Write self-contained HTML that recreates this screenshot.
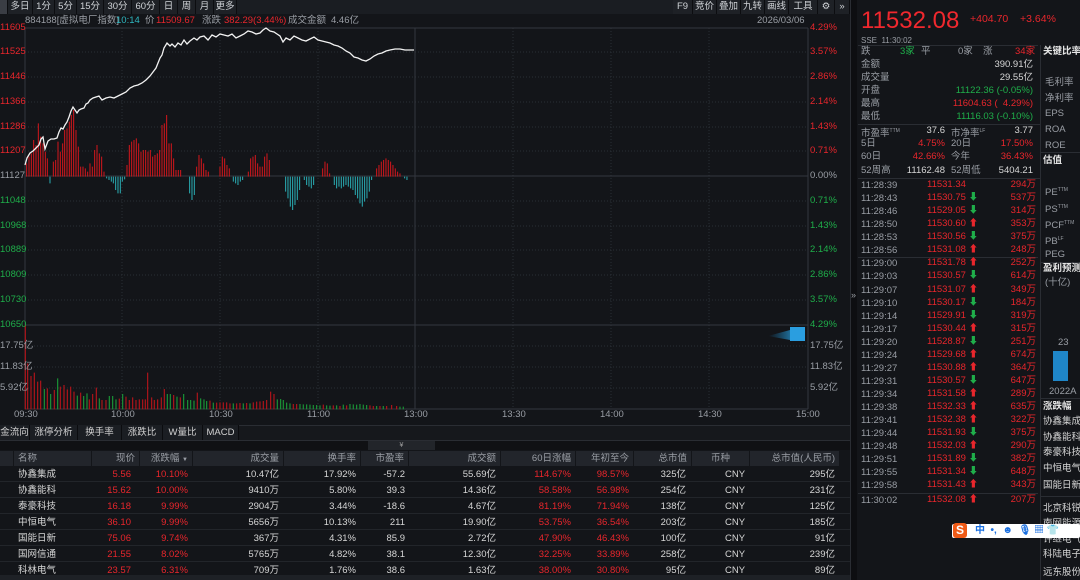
<!DOCTYPE html>
<html><head><meta charset="utf-8"><style>
*{margin:0;padding:0;box-sizing:border-box}
body{width:1080px;height:580px;background:#131519;font-family:"Liberation Sans","Noto Sans CJK SC",sans-serif;font-size:9.5px;color:#c8c8c8;overflow:hidden;position:relative}
.a{position:absolute;white-space:nowrap;line-height:12px}
.r{color:#e8262c}.g{color:#1fae4a}.c{color:#2fb7c0}.w{color:#d6d6d6}.gr{color:#9a9ea5}
.tb{position:absolute;top:0;height:14px;background:#1e2126;border-right:1px solid #0c0d10;line-height:14px;text-align:center;color:#cfd2d6}
.rt{text-align:right}
.tab{position:absolute;top:425px;height:15px;line-height:15px;background:#1b1e23;border-right:1px solid #0b0c0f;text-align:center;color:#d0d0d0}
.hd{position:absolute;top:451px;height:15px;line-height:15px;background:#22252b;color:#9a9ea5;text-align:right;padding-right:4px}
.row{position:absolute;left:0;width:850px;height:16px;border-bottom:1px solid #22252a}
.bold{font-weight:bold;color:#e6e6e6}
</style></head><body>

<div class="a" style="left:0;top:0;width:850px;height:14px;background:#1a1d22"></div>
<div class="tb" style="left:0;width:8px;background:#3a3d44"></div>
<div class="tb" style="left:8px;width:25px">多日</div>
<div class="tb" style="left:33px;width:22px">1分</div>
<div class="tb" style="left:55px;width:22px">5分</div>
<div class="tb" style="left:77px;width:27px">15分</div>
<div class="tb" style="left:104px;width:28px">30分</div>
<div class="tb" style="left:132px;width:28px">60分</div>
<div class="tb" style="left:160px;width:18px">日</div>
<div class="tb" style="left:178px;width:18px">周</div>
<div class="tb" style="left:196px;width:18px">月</div>
<div class="tb" style="left:214px;width:23px">更多</div>
<div class="tb" style="left:673px;width:20px">F9</div>
<div class="tb" style="left:693px;width:24px">竞价</div>
<div class="tb" style="left:717px;width:24px">叠加</div>
<div class="tb" style="left:741px;width:24px">九转</div>
<div class="tb" style="left:765px;width:24px">画线</div>
<div class="tb" style="left:789px;width:29px">工具</div>
<div class="tb" style="left:818px;width:17px">⚙</div>
<div class="tb" style="left:835px;width:15px">»</div>

<div class="a gr" style="left:25px;top:15px">884188[虚拟电厂指数]</div>
<div class="a c" style="left:116px;top:15px">10:14</div>
<div class="a gr" style="left:145px;top:15px">价</div>
<div class="a r" style="left:156px;top:15px">11509.67</div>
<div class="a gr" style="left:202px;top:15px">涨跌</div>
<div class="a r" style="left:224px;top:15px">382.29(3.44%)</div>
<div class="a gr" style="left:288px;top:15px">成交金额</div>
<div class="a gr" style="left:331px;top:15px">4.46亿</div>
<div class="a gr" style="left:757px;top:15px">2026/03/06</div>

<svg class="a" style="left:0;top:0" width="850" height="425">
<g stroke="#2a2e35" stroke-dasharray="1,2" stroke-width="1">
<line x1="25" y1="52" x2="808" y2="52"/><line x1="25" y1="77" x2="808" y2="77"/><line x1="25" y1="102" x2="808" y2="102"/><line x1="25" y1="127" x2="808" y2="127"/><line x1="25" y1="151" x2="808" y2="151"/><line x1="25" y1="201" x2="808" y2="201"/><line x1="25" y1="226" x2="808" y2="226"/><line x1="25" y1="250" x2="808" y2="250"/><line x1="25" y1="275" x2="808" y2="275"/><line x1="25" y1="300" x2="808" y2="300"/>
<line x1="25" y1="346" x2="808" y2="346"/><line x1="25" y1="367" x2="808" y2="367"/><line x1="25" y1="388" x2="808" y2="388"/>
<line x1="122" y1="28" x2="122" y2="409"/><line x1="220" y1="28" x2="220" y2="409"/><line x1="318" y1="28" x2="318" y2="409"/><line x1="513" y1="28" x2="513" y2="409"/><line x1="611" y1="28" x2="611" y2="409"/><line x1="709" y1="28" x2="709" y2="409"/>
</g>
<g stroke="#33373e" stroke-width="1">
<line x1="25" y1="28" x2="25" y2="409"/><line x1="808" y1="28" x2="808" y2="409"/><line x1="415" y1="28" x2="415" y2="409"/>
<line x1="25" y1="28" x2="808" y2="28"/><line x1="25" y1="176" x2="808" y2="176"/><line x1="25" y1="325" x2="808" y2="325"/><line x1="25" y1="409" x2="808" y2="409"/>
</g>
<g transform="translate(0,100) scale(0.3333)" stroke-width="3">
<path stroke="#d4161c" d="M80 230V190M87 230V170M94 230V160M101 230V120M108 230V135M115 230V70M122 230V110M129 230V130M136 230V155M142 230V175M160 230V185M167 230V180M174 230V125M181 230V155M188 230V130M194 230V90M201 230V85M208 230V65M214 230V45M221 230V30M228 230V90M235 230V140M242 230V200M249 230V200M256 230V205M263 230V215M270 230V190M277 230V200M284 230V150M291 230V135M298 230V160M305 230V170M312 230V215M381 230V195M388 230V135M395 230V125M402 230V120M409 230V115M416 230V130M423 230V155M430 230V150M437 230V150M444 230V155M451 230V150M458 230V170M465 230V165M472 230V160M479 230V150M486 230V75M493 230V70M500 230V45M507 230V130M514 230V130M521 230V175M528 230V210M535 230V210M542 230V210M590 230V200M597 230V165M604 230V175M611 230V190M618 230V210M625 230V215M660 230V200M667 230V170M674 230V175M681 230V195M688 230V205M745 230V215M752 230V175M759 230V170M766 230V165M773 230V190M780 230V200M787 230V200M794 230V170M801 230V160M808 230V180M968 230V205M975 230V185M982 230V190M989 230V220M1130 230V205M1137 230V195M1144 230V185M1151 230V180M1158 230V175M1165 230V180M1172 230V185M1179 230V195M1186 230V205M1193 230V215M1200 230V220"/>
<path stroke="#2aaeb5" d="M150 230V250M320 230V235M327 230V240M334 230V245M340 230V250M347 230V270M354 230V280M361 230V280M367 230V245M374 230V238M569 230V280M576 230V300M583 230V285M700 230V245M707 230V250M714 230V255M721 230V245M728 230V240M857 230V275M864 230V295M871 230V320M878 230V330M885 230V315M892 230V300M899 230V270M913 230V240M920 230V255M927 230V260M934 230V265M941 230V255M1003 230V255M1010 230V265M1017 230V260M1024 230V265M1031 230V260M1038 230V255M1045 230V260M1052 230V265M1059 230V270M1066 230V285M1073 230V295M1080 230V310M1087 230V320M1094 230V305M1101 230V295M1108 230V275M1115 230V240M1214 230V235M1221 230V240"/>
</g>
<g transform="translate(0,320) scale(0.3333)" stroke-width="3.5">
<path stroke="#b0141a" d="M76 268V15M83 268V130M93 268V168M103 268V158M113 268V185M122 268V182M142 268V205M163 268V210M181 268V200M192 268V195M202 268V208M212 268V200M222 268V215M242 268V218M268 268V238M278 268V222M289 268V203M306 268V240M318 268V240M358 268V236M378 268V230M388 268V240M398 268V232M408 268V240M418 268V238M428 268V238M436 268V238M443 268V158M455 268V232M463 268V240M473 268V238M484 268V232M493 268V207M521 268V225M541 268V232M592 268V218M630 268V242M650 268V248M660 268V247M670 268V247M680 268V247M690 268V250M710 268V250M720 268V249M740 268V249M760 268V247M770 268V245M780 268V244M790 268V243M800 268V240M812 268V215M822 268V222M880 268V252M890 268V252M970 268V254M1000 268V256M1020 268V258M1040 268V256M1110 268V256M1120 268V258M1140 268V258M1160 268V258M1175 268V255M1190 268V258"/>
<path stroke="#1a9436" d="M133 268V207M152 268V222M173 268V175M232 268V227M251 268V228M261 268V220M298 268V235M328 268V228M338 268V228M348 268V238M368 268V222M502 268V222M511 268V222M531 268V230M551 268V222M563 268V240M572 268V240M582 268V242M602 268V235M612 268V238M620 268V243M640 268V248M700 268V250M730 268V250M750 268V250M832 268V238M842 268V237M850 268V240M860 268V248M870 268V250M900 268V252M910 268V253M920 268V253M930 268V254M940 268V255M950 268V255M960 268V256M980 268V256M990 268V257M1010 268V256M1030 268V254M1050 268V252M1060 268V253M1070 268V254M1080 268V252M1090 268V254M1100 268V255M1130 268V258M1150 268V258M1200 268V260M1210 268V260"/>
</g>
<polyline fill="none" stroke="#f2f2f2" stroke-width="1.3" points="25,165 27,158 30,153 33,151 36,148 39,145 41,139 43,137 45,149 48,141 51,139 54,139 57,138 59,132 61,128 63,129 65,125 67,122 69,117 71,111 73,107 75,110 77,113 79,110 81,109 84,108 86,104 88,103 90,100 93,98 96,97 99,96 102,100 106,98 110,97 114,98 118,96 122,94 126,92 130,88 134,86 138,85 142,83 146,80 150,76 153,72 156,68 158,63 160,58 162,55 164,48 167,43 170,46 172,44 175,47 178,43 181,45 184,40 187,44 190,41 194,38 197,40 200,37 204,36 208,40 212,35 216,37 220,34 224,35 228,36 232,34 236,38 240,36 244,34 248,31 252,32 256,34 260,33 263,30 266,28 270,31 274,32 277,34 280,36 283,42 286,38 290,40 294,36 298,38 302,40 306,41 310,39 314,37 318,40 322,41 326,42 330,43 334,45 338,46 342,48 346,51 350,53 354,57 358,58 362,60 366,61 370,59 374,56 378,54 382,53 386,51 390,50 395,49 400,49 405,50 414,50"/>
<defs><linearGradient id="bl" x1="0" x2="1"><stop offset="0" stop-color="#1c8fd0" stop-opacity="0"/><stop offset="1" stop-color="#27a6ea"/></linearGradient></defs>
<path d="M768 336 L790 330 L790 340 Z" fill="url(#bl)" opacity=".6"/>
<rect x="790" y="327" width="15" height="14" fill="#2a9ee0"/>
</svg>

<div class="a r" style="left:0;top:22px">11605</div>
<div class="a r" style="left:0;top:46px">11525</div>
<div class="a r" style="left:0;top:71px">11446</div>
<div class="a r" style="left:0;top:96px">11366</div>
<div class="a r" style="left:0;top:121px">11286</div>
<div class="a r" style="left:0;top:145px">11207</div>
<div class="a gr" style="left:0;top:170px">11127</div>
<div class="a g" style="left:0;top:195px">11048</div>
<div class="a g" style="left:0;top:220px">10968</div>
<div class="a g" style="left:0;top:244px">10889</div>
<div class="a g" style="left:0;top:269px">10809</div>
<div class="a g" style="left:0;top:294px">10730</div>
<div class="a g" style="left:0;top:319px">10650</div>
<div class="a gr" style="left:0;top:340px">17.75亿</div>
<div class="a gr" style="left:0;top:361px">11.83亿</div>
<div class="a gr" style="left:0;top:382px">5.92亿</div>
<div class="a r" style="left:810px;top:22px">4.29%</div>
<div class="a r" style="left:810px;top:46px">3.57%</div>
<div class="a r" style="left:810px;top:71px">2.86%</div>
<div class="a r" style="left:810px;top:96px">2.14%</div>
<div class="a r" style="left:810px;top:121px">1.43%</div>
<div class="a r" style="left:810px;top:145px">0.71%</div>
<div class="a gr" style="left:810px;top:170px">0.00%</div>
<div class="a g" style="left:810px;top:195px">0.71%</div>
<div class="a g" style="left:810px;top:220px">1.43%</div>
<div class="a g" style="left:810px;top:244px">2.14%</div>
<div class="a g" style="left:810px;top:269px">2.86%</div>
<div class="a g" style="left:810px;top:294px">3.57%</div>
<div class="a g" style="left:810px;top:319px">4.29%</div>
<div class="a gr" style="left:810px;top:340px">17.75亿</div>
<div class="a gr" style="left:810px;top:361px">11.83亿</div>
<div class="a gr" style="left:810px;top:382px">5.92亿</div>
<div class="a gr" style="left:14px;top:409px">09:30</div>
<div class="a gr" style="left:111px;top:409px">10:00</div>
<div class="a gr" style="left:209px;top:409px">10:30</div>
<div class="a gr" style="left:307px;top:409px">11:00</div>
<div class="a gr" style="left:404px;top:409px">13:00</div>
<div class="a gr" style="left:502px;top:409px">13:30</div>
<div class="a gr" style="left:600px;top:409px">14:00</div>
<div class="a gr" style="left:698px;top:409px">14:30</div>
<div class="a gr" style="left:796px;top:409px">15:00</div>

<div class="a" style="left:850px;top:0;width:7px;height:580px;background:#0d0e11;border-left:1px solid #2a2d33"></div>
<div class="a gr" style="left:851px;top:289px;font-size:9px">»</div>

<div class="a" style="left:0;top:425px;width:850px;height:15px;background:#16181c;border-top:1px solid #2a2d33"></div>
<div class="tab" style="left:0;width:30px">金流向</div>
<div class="tab" style="left:30px;width:48px">涨停分析</div>
<div class="tab" style="left:78px;width:44px">换手率</div>
<div class="tab" style="left:122px;width:41px">涨跌比</div>
<div class="tab" style="left:163px;width:40px">W量比</div>
<div class="tab" style="left:203px;width:36px">MACD</div>
<div class="a" style="left:0;top:440px;width:850px;height:10px;background:#101114;border-top:1px solid #2a2d33"></div>
<div class="a" style="left:368px;top:441px;width:67px;height:9px;background:#22252a;text-align:center;line-height:9px;font-size:7px;color:#999">¥</div>

<div class="hd" style="left:0;width:13px"></div>
<div class="hd" style="left:14px;width:77px;text-align:left;padding-left:4px">名称</div>
<div class="hd" style="left:92px;width:47px">现价</div>
<div class="hd" style="left:140px;width:52px">涨跌幅 <span style="font-size:6px">▼</span></div>
<div class="hd" style="left:193px;width:90px">成交量</div>
<div class="hd" style="left:284px;width:76px">换手率</div>
<div class="hd" style="left:361px;width:47px">市盈率</div>
<div class="hd" style="left:409px;width:91px">成交额</div>
<div class="hd" style="left:501px;width:74px">60日涨幅</div>
<div class="hd" style="left:576px;width:57px">年初至今</div>
<div class="hd" style="left:634px;width:57px">总市值</div>
<div class="hd" style="left:692px;width:57px;text-align:center;padding:0">币种</div>
<div class="hd" style="left:750px;width:89px">总市值(人民币)</div>

<div class="row" style="top:466px"></div><div class="row" style="top:482px"></div><div class="row" style="top:498px"></div><div class="row" style="top:514px"></div><div class="row" style="top:530px"></div><div class="row" style="top:546px"></div><div class="row" style="top:562px"></div>

<div class="a" style="left:0;top:467px;width:850px;line-height:16px">
<div style="position:relative;height:16px"><span class="a w" style="left:18px;line-height:16px">协鑫集成</span><span class="a r rt" style="right:719px;line-height:16px">5.56</span><span class="a r rt" style="right:662px;line-height:16px">10.10%</span><span class="a w rt" style="right:571px;line-height:16px">10.47亿</span><span class="a w rt" style="right:494px;line-height:16px">17.92%</span><span class="a w rt" style="right:445px;line-height:16px">-57.2</span><span class="a w rt" style="right:354px;line-height:16px">55.69亿</span><span class="a r rt" style="right:279px;line-height:16px">114.67%</span><span class="a r rt" style="right:221px;line-height:16px">98.57%</span><span class="a w rt" style="right:164px;line-height:16px">325亿</span><span class="a w" style="left:725px;line-height:16px">CNY</span><span class="a w rt" style="right:15px;line-height:16px">295亿</span></div>
<div style="position:relative;height:16px"><span class="a w" style="left:18px;line-height:16px">协鑫能科</span><span class="a r rt" style="right:719px;line-height:16px">15.62</span><span class="a r rt" style="right:662px;line-height:16px">10.00%</span><span class="a w rt" style="right:571px;line-height:16px">9410万</span><span class="a w rt" style="right:494px;line-height:16px">5.80%</span><span class="a w rt" style="right:445px;line-height:16px">39.3</span><span class="a w rt" style="right:354px;line-height:16px">14.36亿</span><span class="a r rt" style="right:279px;line-height:16px">58.58%</span><span class="a r rt" style="right:221px;line-height:16px">56.98%</span><span class="a w rt" style="right:164px;line-height:16px">254亿</span><span class="a w" style="left:725px;line-height:16px">CNY</span><span class="a w rt" style="right:15px;line-height:16px">231亿</span></div>
<div style="position:relative;height:16px"><span class="a w" style="left:18px;line-height:16px">泰豪科技</span><span class="a r rt" style="right:719px;line-height:16px">16.18</span><span class="a r rt" style="right:662px;line-height:16px">9.99%</span><span class="a w rt" style="right:571px;line-height:16px">2904万</span><span class="a w rt" style="right:494px;line-height:16px">3.44%</span><span class="a w rt" style="right:445px;line-height:16px">-18.6</span><span class="a w rt" style="right:354px;line-height:16px">4.67亿</span><span class="a r rt" style="right:279px;line-height:16px">81.19%</span><span class="a r rt" style="right:221px;line-height:16px">71.94%</span><span class="a w rt" style="right:164px;line-height:16px">138亿</span><span class="a w" style="left:725px;line-height:16px">CNY</span><span class="a w rt" style="right:15px;line-height:16px">125亿</span></div>
<div style="position:relative;height:16px"><span class="a w" style="left:18px;line-height:16px">中恒电气</span><span class="a r rt" style="right:719px;line-height:16px">36.10</span><span class="a r rt" style="right:662px;line-height:16px">9.99%</span><span class="a w rt" style="right:571px;line-height:16px">5656万</span><span class="a w rt" style="right:494px;line-height:16px">10.13%</span><span class="a w rt" style="right:445px;line-height:16px">211</span><span class="a w rt" style="right:354px;line-height:16px">19.90亿</span><span class="a r rt" style="right:279px;line-height:16px">53.75%</span><span class="a r rt" style="right:221px;line-height:16px">36.54%</span><span class="a w rt" style="right:164px;line-height:16px">203亿</span><span class="a w" style="left:725px;line-height:16px">CNY</span><span class="a w rt" style="right:15px;line-height:16px">185亿</span></div>
<div style="position:relative;height:16px"><span class="a w" style="left:18px;line-height:16px">国能日新</span><span class="a r rt" style="right:719px;line-height:16px">75.06</span><span class="a r rt" style="right:662px;line-height:16px">9.74%</span><span class="a w rt" style="right:571px;line-height:16px">367万</span><span class="a w rt" style="right:494px;line-height:16px">4.31%</span><span class="a w rt" style="right:445px;line-height:16px">85.9</span><span class="a w rt" style="right:354px;line-height:16px">2.72亿</span><span class="a r rt" style="right:279px;line-height:16px">47.90%</span><span class="a r rt" style="right:221px;line-height:16px">46.43%</span><span class="a w rt" style="right:164px;line-height:16px">100亿</span><span class="a w" style="left:725px;line-height:16px">CNY</span><span class="a w rt" style="right:15px;line-height:16px">91亿</span></div>
<div style="position:relative;height:16px"><span class="a w" style="left:18px;line-height:16px">国网信通</span><span class="a r rt" style="right:719px;line-height:16px">21.55</span><span class="a r rt" style="right:662px;line-height:16px">8.02%</span><span class="a w rt" style="right:571px;line-height:16px">5765万</span><span class="a w rt" style="right:494px;line-height:16px">4.82%</span><span class="a w rt" style="right:445px;line-height:16px">38.1</span><span class="a w rt" style="right:354px;line-height:16px">12.30亿</span><span class="a r rt" style="right:279px;line-height:16px">32.25%</span><span class="a r rt" style="right:221px;line-height:16px">33.89%</span><span class="a w rt" style="right:164px;line-height:16px">258亿</span><span class="a w" style="left:725px;line-height:16px">CNY</span><span class="a w rt" style="right:15px;line-height:16px">239亿</span></div>
<div style="position:relative;height:16px"><span class="a w" style="left:18px;line-height:16px">科林电气</span><span class="a r rt" style="right:719px;line-height:16px">23.57</span><span class="a r rt" style="right:662px;line-height:16px">6.31%</span><span class="a w rt" style="right:571px;line-height:16px">709万</span><span class="a w rt" style="right:494px;line-height:16px">1.76%</span><span class="a w rt" style="right:445px;line-height:16px">38.6</span><span class="a w rt" style="right:354px;line-height:16px">1.63亿</span><span class="a r rt" style="right:279px;line-height:16px">38.00%</span><span class="a r rt" style="right:221px;line-height:16px">30.80%</span><span class="a w rt" style="right:164px;line-height:16px">95亿</span><span class="a w" style="left:725px;line-height:16px">CNY</span><span class="a w rt" style="right:15px;line-height:16px">89亿</span></div>
</div>
<div class="a" style="left:0;top:575px;width:850px;height:5px;background:#1e2126"></div>

<div class="a" style="left:861px;top:8px;font-size:24px;line-height:26px;color:#f0282e">11532.08</div>
<div class="a r" style="left:970px;top:13px;font-size:10.5px">+404.70</div>
<div class="a r" style="left:1020px;top:13px;font-size:10.5px">+3.64%</div>
<div class="a gr" style="left:861px;top:35px;font-size:8px">SSE&nbsp; 11:30:02</div>
<div class="a" style="left:858px;top:45px;width:180px;border-top:1px solid #2a2d33"></div>
<div class="a" style="left:1040px;top:45px;width:1px;height:535px;background:#2a2d33"></div>
<div class="a gr" style="left:861px;top:46px">跌</div><div class="a g" style="left:900px;top:46px">3家</div><div class="a gr" style="left:921px;top:46px">平</div><div class="a gr" style="left:958px;top:46px">0家</div><div class="a gr" style="left:983px;top:46px">涨</div><div class="a r" style="left:1015px;top:46px">34家</div>
<div class="a gr" style="left:861px;top:59px">金额</div><div class="a w rt" style="right:47px;top:59px">390.91亿</div>
<div class="a gr" style="left:861px;top:72px">成交量</div><div class="a w rt" style="right:47px;top:72px">29.55亿</div>
<div class="a gr" style="left:861px;top:85px">开盘</div><div class="a g rt" style="right:47px;top:85px">11122.36 (-0.05%)</div>
<div class="a gr" style="left:861px;top:98px">最高</div><div class="a r rt" style="right:47px;top:98px">11604.63 (&nbsp; 4.29%)</div>
<div class="a gr" style="left:861px;top:111px">最低</div><div class="a g rt" style="right:47px;top:111px">11116.03 (-0.10%)</div>
<div class="a" style="left:858px;top:124px;width:182px;border-top:1px solid #2a2d33"></div>
<div class="a gr" style="left:861px;top:125px">市盈率<sup style="font-size:5px">TTM</sup></div><div class="a w rt" style="right:135px;top:125px">37.6</div><div class="a gr" style="left:951px;top:125px">市净率<sup style="font-size:5px">LF</sup></div><div class="a w rt" style="right:47px;top:125px">3.77</div>
<div class="a gr" style="left:861px;top:138px">5日</div><div class="a r rt" style="right:135px;top:138px">4.75%</div><div class="a gr" style="left:951px;top:138px">20日</div><div class="a r rt" style="right:47px;top:138px">17.50%</div>
<div class="a gr" style="left:861px;top:151px">60日</div><div class="a r rt" style="right:135px;top:151px">42.66%</div><div class="a gr" style="left:951px;top:151px">今年</div><div class="a r rt" style="right:47px;top:151px">36.43%</div>
<div class="a gr" style="left:861px;top:165px">52周高</div><div class="a w rt" style="right:135px;top:165px">11162.48</div><div class="a gr" style="left:951px;top:165px">52周低</div><div class="a w rt" style="right:47px;top:165px">5404.21</div>
<div class="a" style="left:858px;top:178px;width:182px;border-top:1px solid #2a2d33"></div>
<div class="a" style="left:858px;top:257px;width:180px;border-top:1px solid #2a2d33"></div>
<div class="a" style="left:858px;top:493px;width:180px;border-top:1px solid #2a2d33"></div>

<div class="a" style="left:861px;top:179px;width:177px;line-height:13.07px">
<div style="position:relative;height:13.07px"><span class="gr">11:28:39</span><span class="a r" style="left:66px;top:0">11531.34</span><span class="a r rt" style="right:2px;top:0">294万</span></div>
<div style="position:relative;height:13.07px"><span class="gr">11:28:43</span><span class="a r" style="left:66px;top:0">11530.75 <b class="g">⬇</b></span><span class="a r rt" style="right:2px;top:0">537万</span></div>
<div style="position:relative;height:13.07px"><span class="gr">11:28:46</span><span class="a r" style="left:66px;top:0">11529.05 <b class="g">⬇</b></span><span class="a r rt" style="right:2px;top:0">314万</span></div>
<div style="position:relative;height:13.07px"><span class="gr">11:28:50</span><span class="a r" style="left:66px;top:0">11530.60 <b>⬆</b></span><span class="a r rt" style="right:2px;top:0">353万</span></div>
<div style="position:relative;height:13.07px"><span class="gr">11:28:53</span><span class="a r" style="left:66px;top:0">11530.56 <b class="g">⬇</b></span><span class="a r rt" style="right:2px;top:0">375万</span></div>
<div style="position:relative;height:13.07px"><span class="gr">11:28:56</span><span class="a r" style="left:66px;top:0">11531.08 <b>⬆</b></span><span class="a r rt" style="right:2px;top:0">248万</span></div>
<div style="position:relative;height:13.07px"><span class="gr">11:29:00</span><span class="a r" style="left:66px;top:0">11531.78 <b>⬆</b></span><span class="a r rt" style="right:2px;top:0">252万</span></div>
<div style="position:relative;height:13.07px"><span class="gr">11:29:03</span><span class="a r" style="left:66px;top:0">11530.57 <b class="g">⬇</b></span><span class="a r rt" style="right:2px;top:0">614万</span></div>
<div style="position:relative;height:13.07px"><span class="gr">11:29:07</span><span class="a r" style="left:66px;top:0">11531.07 <b>⬆</b></span><span class="a r rt" style="right:2px;top:0">349万</span></div>
<div style="position:relative;height:13.07px"><span class="gr">11:29:10</span><span class="a r" style="left:66px;top:0">11530.17 <b class="g">⬇</b></span><span class="a r rt" style="right:2px;top:0">184万</span></div>
<div style="position:relative;height:13.07px"><span class="gr">11:29:14</span><span class="a r" style="left:66px;top:0">11529.91 <b class="g">⬇</b></span><span class="a r rt" style="right:2px;top:0">319万</span></div>
<div style="position:relative;height:13.07px"><span class="gr">11:29:17</span><span class="a r" style="left:66px;top:0">11530.44 <b>⬆</b></span><span class="a r rt" style="right:2px;top:0">315万</span></div>
<div style="position:relative;height:13.07px"><span class="gr">11:29:20</span><span class="a r" style="left:66px;top:0">11528.87 <b class="g">⬇</b></span><span class="a r rt" style="right:2px;top:0">251万</span></div>
<div style="position:relative;height:13.07px"><span class="gr">11:29:24</span><span class="a r" style="left:66px;top:0">11529.68 <b>⬆</b></span><span class="a r rt" style="right:2px;top:0">674万</span></div>
<div style="position:relative;height:13.07px"><span class="gr">11:29:27</span><span class="a r" style="left:66px;top:0">11530.88 <b>⬆</b></span><span class="a r rt" style="right:2px;top:0">364万</span></div>
<div style="position:relative;height:13.07px"><span class="gr">11:29:31</span><span class="a r" style="left:66px;top:0">11530.57 <b class="g">⬇</b></span><span class="a r rt" style="right:2px;top:0">647万</span></div>
<div style="position:relative;height:13.07px"><span class="gr">11:29:34</span><span class="a r" style="left:66px;top:0">11531.58 <b>⬆</b></span><span class="a r rt" style="right:2px;top:0">289万</span></div>
<div style="position:relative;height:13.07px"><span class="gr">11:29:38</span><span class="a r" style="left:66px;top:0">11532.33 <b>⬆</b></span><span class="a r rt" style="right:2px;top:0">635万</span></div>
<div style="position:relative;height:13.07px"><span class="gr">11:29:41</span><span class="a r" style="left:66px;top:0">11532.38 <b>⬆</b></span><span class="a r rt" style="right:2px;top:0">322万</span></div>
<div style="position:relative;height:13.07px"><span class="gr">11:29:44</span><span class="a r" style="left:66px;top:0">11531.93 <b class="g">⬇</b></span><span class="a r rt" style="right:2px;top:0">375万</span></div>
<div style="position:relative;height:13.07px"><span class="gr">11:29:48</span><span class="a r" style="left:66px;top:0">11532.03 <b>⬆</b></span><span class="a r rt" style="right:2px;top:0">290万</span></div>
<div style="position:relative;height:13.07px"><span class="gr">11:29:51</span><span class="a r" style="left:66px;top:0">11531.89 <b class="g">⬇</b></span><span class="a r rt" style="right:2px;top:0">382万</span></div>
<div style="position:relative;height:13.07px"><span class="gr">11:29:55</span><span class="a r" style="left:66px;top:0">11531.34 <b class="g">⬇</b></span><span class="a r rt" style="right:2px;top:0">648万</span></div>
<div style="position:relative;height:13.07px"><span class="gr">11:29:58</span><span class="a r" style="left:66px;top:0">11531.43 <b>⬆</b></span><span class="a r rt" style="right:2px;top:0">343万</span></div>
<div style="position:relative;height:13.07px;margin-top:1px"><span class="gr">11:30:02</span><span class="a r" style="left:66px;top:0">11532.08 <b>⬆</b></span><span class="a r rt" style="right:2px;top:0">207万</span></div>
</div>

<div class="a bold" style="left:1043px;top:46px">关键比率</div>
<div class="a gr" style="left:1045px;top:77px">毛利率</div>
<div class="a gr" style="left:1045px;top:93px">净利率</div>
<div class="a gr" style="left:1045px;top:108px">EPS</div>
<div class="a gr" style="left:1045px;top:124px">ROA</div>
<div class="a gr" style="left:1045px;top:140px">ROE</div>
<div class="a" style="left:1041px;top:152px;width:39px;border-top:1px solid #2a2d33"></div>
<div class="a bold" style="left:1043px;top:155px">估值</div>
<div class="a gr" style="left:1045px;top:184px">PE<sup style="font-size:5px">TTM</sup></div>
<div class="a gr" style="left:1045px;top:201px">PS<sup style="font-size:5px">TTM</sup></div>
<div class="a gr" style="left:1045px;top:217px">PCF<sup style="font-size:5px">TTM</sup></div>
<div class="a gr" style="left:1045px;top:233px">PB<sup style="font-size:5px">LF</sup></div>
<div class="a gr" style="left:1045px;top:249px">PEG</div>
<div class="a" style="left:1041px;top:262px;width:39px;border-top:1px solid #2a2d33"></div>
<div class="a bold" style="left:1043px;top:263px">盈利预测</div>
<div class="a gr" style="left:1045px;top:277px">(十亿)</div>
<div class="a gr" style="left:1058px;top:337px">23</div>
<div class="a" style="left:1053px;top:351px;width:15px;height:30px;background:#1f86c8"></div>
<div class="a gr" style="left:1049px;top:386px">2022A</div>
<div class="a" style="left:1041px;top:398px;width:39px;border-top:1px solid #2a2d33"></div>
<div class="a bold" style="left:1043px;top:401px">涨跌幅</div>
<div class="a w" style="left:1043px;top:416px">协鑫集成</div>
<div class="a w" style="left:1043px;top:432px">协鑫能科</div>
<div class="a w" style="left:1043px;top:447px">泰豪科技</div>
<div class="a w" style="left:1043px;top:463px">中恒电气</div>
<div class="a w" style="left:1043px;top:480px">国能日新</div>
<div class="a" style="left:1041px;top:496px;width:39px;border-top:1px solid #2a2d33"></div>
<div class="a w" style="left:1043px;top:503px">北京科锐</div>
<div class="a w" style="left:1043px;top:518px">南网能源</div>
<div class="a w" style="left:1043px;top:534px">许继电气</div>
<div class="a w" style="left:1043px;top:549px">科陆电子</div>
<div class="a w" style="left:1043px;top:567px">远东股份</div>

<div class="a" style="left:952px;top:524px;width:128px;height:14px;background:#fff;border-radius:2px"></div>
<div class="a" style="left:953px;top:523px;width:14px;height:15px;background:#f05a16;border-radius:3px;color:#fff;font-weight:bold;font-size:12px;line-height:15px;text-align:center">S</div>
<div class="a" style="left:975px;top:525px;color:#1a6fe0;font-weight:bold;font-size:10px">中 &nbsp;•, &nbsp;☻ &nbsp;🎙 ▦ 👕</div>
</body></html>
